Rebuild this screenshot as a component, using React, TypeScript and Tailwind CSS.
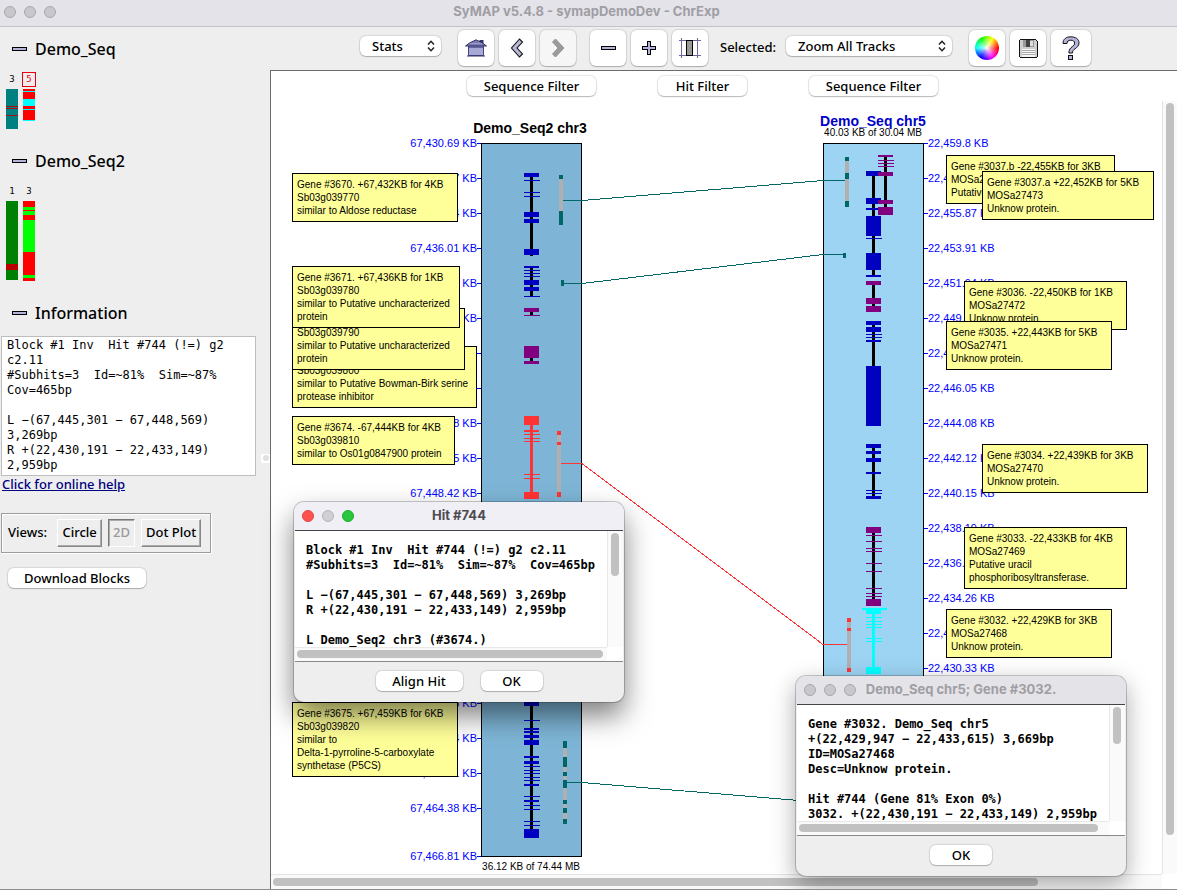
import type { ReactNode } from "react";

const UI = "font-['Noto_Sans','Open_Sans',sans-serif]";
const MONO = "font-['DejaVu_Sans_Mono',monospace]";

const BLUE = "#0000c0";
const PURPLE = "#800080";
const RED = "#ff3333";
const CYAN = "#00ffff";
const TEAL = "#006666";
const GREY = "#b0b0b0";

type Span = [y: number, h: number];

interface Gene {
  color: string;
  spine: Span;
  spineColor?: string;
  x?: number;
  exons: Span[];
}

const leftGenes: Gene[] = [
  { color: BLUE, spine: [177, 79], exons: [[173, 4], [180, 1], [192, 1], [196, 1], [212, 5], [219, 4], [249, 6]] },
  { color: BLUE, spine: [268, 28], exons: [[266, 2], [270, 1], [273, 1], [276, 1], [280, 5], [287, 4], [296, 1]] },
  { color: PURPLE, spine: [312, 3], exons: [[308, 4], [315, 1]] },
  { color: PURPLE, spine: [358, 3], exons: [[346, 12], [361, 3]] },
  {
    color: RED,
    spineColor: RED,
    spine: [425, 67],
    exons: [[416, 9], [430, 2], [434, 1], [438, 1], [441, 1], [474, 1], [478, 1], [492, 7]],
  },
  {
    color: BLUE,
    spine: [706, 124],
    exons: [
      [696, 10], [720, 1], [728, 2], [731, 2], [735, 3], [740, 5], [756, 2], [761, 3], [766, 1], [770, 1], [773, 1],
      [777, 1], [780, 1], [784, 2], [796, 1], [800, 2], [805, 1], [809, 1], [821, 1], [825, 1], [829, 9],
    ],
  },
];

const rightGenes: Gene[] = [
  {
    color: BLUE,
    spine: [176, 100],
    exons: [[171, 5], [198, 6], [208, 2], [216, 20], [238, 1], [253, 17], [275, 2]],
  },
  { color: PURPLE, x: 878, spine: [157, 50], exons: [[155, 2], [160, 1], [163, 1], [166, 1], [172, 4], [200, 4], [207, 8]] },
  { color: PURPLE, spine: [285, 21], exons: [[281, 4], [298, 6], [306, 6]] },
  { color: BLUE, spine: [325, 41], exons: [[321, 4], [327, 5], [334, 1], [337, 1], [340, 2], [366, 60]] },
  { color: BLUE, spine: [448, 48], exons: [[444, 4], [451, 3], [458, 4], [472, 2], [490, 1], [493, 1], [496, 3]] },
  {
    color: PURPLE,
    spine: [533, 66],
    exons: [
      [527, 6], [535, 1], [541, 1], [548, 1], [551, 1], [563, 1], [571, 1], [588, 1], [593, 1], [596, 1], [599, 7],
    ],
  },
  {
    color: CYAN,
    spineColor: CYAN,
    spine: [614, 53],
    exons: [[610, 4], [617, 1], [621, 1], [624, 1], [627, 1], [638, 1], [641, 1], [667, 7]],
  },
];

interface HitBar {
  x: number;
  w: number;
  range: Span;
  color: string;
  parts: Span[];
}

const hitBars: HitBar[] = [
  { x: 559, w: 4, range: [175, 50], color: TEAL, parts: [[175, 4], [211, 14]] },
  { x: 561, w: 3, range: [280, 6], color: TEAL, parts: [[280, 6]] },
  { x: 557, w: 4, range: [431, 66], color: RED, parts: [[431, 4], [442, 3], [492, 5]] },
  {
    x: 563, w: 4, range: [741, 83], color: TEAL,
    parts: [[741, 7], [757, 10], [772, 4], [780, 8], [800, 4], [808, 5], [819, 5]],
  },
  { x: 845, w: 4, range: [157, 50], color: TEAL, parts: [[157, 4], [173, 6], [201, 6]] },
  { x: 843, w: 3, range: [253, 5], color: TEAL, parts: [[253, 5]] },
  { x: 847, w: 4, range: [618, 54], color: RED, parts: [[618, 4], [628, 3], [668, 4]] },
];

const hitLines = [
  { color: TEAL, points: "563,200.5 582,200.5 823,180.5 845,180.5" },
  { color: TEAL, points: "564,283.5 582,283.5 823,254.5 843,254.5" },
  { color: RED, points: "561,463.5 582,463.5 823,644.5 847,644.5" },
  { color: TEAL, points: "567,782.5 582,782.5 823,802.5 845,802.5" },
];

interface Note {
  x: number;
  y: number;
  w: number;
  lines: string[];
}

const notes: Note[] = [
  { x: 292, y: 173, w: 166, lines: ["Gene #3670. +67,432KB for 4KB", "Sb03g039770", "similar to Aldose reductase"] },
  {
    x: 292, y: 346, w: 185,
    lines: ["Gene #3673.", "Sb03g039800", "similar to Putative Bowman-Birk serine", "protease inhibitor"],
  },
  { x: 292, y: 308, w: 173, lines: ["Gene #3672.", "Sb03g039790", "similar to Putative uncharacterized", "protein"] },
  {
    x: 292, y: 266, w: 168,
    lines: ["Gene #3671. +67,436KB for 1KB", "Sb03g039780", "similar to Putative uncharacterized", "protein"],
  },
  { x: 292, y: 416, w: 163, lines: ["Gene #3674. -67,444KB for 4KB", "Sb03g039810", "similar to Os01g0847900 protein"] },
  {
    x: 292, y: 702, w: 166,
    lines: [
      "Gene #3675. +67,459KB for 6KB", "Sb03g039820", "similar to", "Delta-1-pyrroline-5-carboxylate",
      "synthetase (P5CS)",
    ],
  },
  { x: 946, y: 155, w: 169, lines: ["Gene #3037.b -22,455KB for 3KB", "MOSa27473", "Putative"] },
  { x: 982, y: 171, w: 172, lines: ["Gene #3037.a +22,452KB for 5KB", "MOSa27473", "Unknow protein."] },
  { x: 964, y: 281, w: 163, lines: ["Gene #3036. -22,450KB for 1KB", "MOSa27472", "Unknow protein."] },
  { x: 946, y: 321, w: 166, lines: ["Gene #3035. +22,443KB for 5KB", "MOSa27471", "Unknow protein."] },
  { x: 982, y: 444, w: 166, lines: ["Gene #3034. +22,439KB for 3KB", "MOSa27470", "Unknow protein."] },
  {
    x: 964, y: 527, w: 163,
    lines: ["Gene #3033. -22,433KB for 4KB", "MOSa27469", "Putative uracil", "phosphoribosyltransferase."],
  },
  { x: 946, y: 609, w: 166, lines: ["Gene #3032. +22,429KB for 3KB", "MOSa27468", "Unknow protein."] },
];

/* Diagram coordinates start at this origin. */
const ORIGIN = { x: 271, y: 101 };

function kb(value: number) {
  const rounded = Math.round(value * 100) / 100;
  return `${rounded.toLocaleString("en-US", { maximumFractionDigits: 2 })} KB`;
}

const leftTicks = [
  ...[0, 1, 2, 3, 4, 5, 6, 7, 8, 9, 10, 16, 17, 18, 19].map((k) => ({
    y: 143 + 35 * k,
    label: kb(67430.6935 + 1.7731 * k),
  })),
  { y: 856, label: "67,466.81 KB" },
];
const rightTicks = Array.from({ length: 16 }, (_, k) => ({ y: 143 + 35 * k, label: kb(22459.8 - 1.9647 * k) }));

function GeneGlyph({ gene, x }: { gene: Gene; x: number }) {
  const gx = gene.x ?? x;
  return (
    <g>
      <rect x={gx + 6} y={gene.spine[0]} width={3} height={gene.spine[1]} fill={gene.spineColor ?? "#000"} />
      {gene.exons.map(([y, h]) => (
        <rect key={y} x={gx} y={y} width={h === 1 ? 16 : 15} height={h} fill={gene.color} />
      ))}
    </g>
  );
}

function Diagram() {
  return (
    <div className="relative h-[773px] w-[890px] font-['Liberation_Sans',Arial,sans-serif]">
      <svg
        className="block"
        width={890}
        height={773}
        viewBox="271 101 890 773"
        shapeRendering="crispEdges"
        role="img"
        aria-label="Synteny between Demo_Seq2 chr3 and Demo_Seq chr5"
      >
        <rect x={481.5} y={143.5} width={100} height={713} fill="#7eb5d6" stroke="#000" />
        <rect x={823.5} y={143.5} width={100} height={713} fill="#9dd4f3" stroke="#000" />
        <g fontSize={11} fill="#0000ff">
          {leftTicks.map((t) => (
            <g key={t.y}>
              <rect x={477} y={t.y} width={4} height={1} />
              <text x={477} y={t.y + 4} textAnchor="end">{t.label}</text>
            </g>
          ))}
          {rightTicks.map((t) => (
            <g key={t.y}>
              <rect x={924} y={t.y} width={4} height={1} />
              <text x={928} y={t.y + 4}>{t.label}</text>
            </g>
          ))}
        </g>
        {leftGenes.map((g) => <GeneGlyph key={g.spine[0]} gene={g} x={524} />)}
        {rightGenes.map((g) => <GeneGlyph key={g.spine[0]} gene={g} x={866} />)}
        <rect x={862} y={608} width={25} height={2} fill={CYAN} />
        {hitLines.map((l) => (
          <polyline key={l.points} points={l.points} fill="none" stroke={l.color} />
        ))}
        {hitBars.map((b) => (
          <g key={`${b.x}-${b.range[0]}`}>
            <rect x={b.x} y={b.range[0]} width={b.w} height={b.range[1]} fill={GREY} />
            {b.parts.map(([y, h]) => <rect key={y} x={b.x} y={y} width={b.w} height={h} fill={b.color} />)}
          </g>
        ))}
        <g textAnchor="middle">
          <text x={530} y={133} fontSize={14} fontWeight="bold">Demo_Seq2 chr3</text>
          <text x={873} y={126} fontSize={14} fontWeight="bold" fill="#0000c8">Demo_Seq chr5</text>
          <text x={873} y={136} fontSize={10}>40.03 KB of 30.04 MB</text>
          <text x={531} y={870} fontSize={10}>36.12 KB of 74.44 MB</text>
        </g>
      </svg>
      {notes.map((n) => (
        <div
          key={n.lines[0]}
          className="absolute border border-black bg-[#ffff99] px-1 py-1 text-[10px] leading-[13px] whitespace-nowrap text-black"
          style={{ left: n.x - ORIGIN.x, top: n.y - ORIGIN.y, width: n.w }}
        >
          {n.lines.map((line) => <p key={line}>{line}</p>)}
        </div>
      ))}
    </div>
  );
}

function PushButton({ children, className = "" }: { children: ReactNode; className?: string }) {
  return (
    <button
      type="button"
      className={`h-5 shrink-0 rounded-md bg-white text-[13px] leading-5 font-medium text-black shadow-[0_0_1px_1px_rgba(0,0,0,0.1),0_1px_1px_rgba(0,0,0,0.2)] ${className}`}
    >
      {children}
    </button>
  );
}

function ToolButton({ label, disabled, className = "w-9", children }: {
  label: string;
  disabled?: boolean;
  className?: string;
  children: ReactNode;
}) {
  return (
    <button
      type="button"
      aria-label={label}
      disabled={disabled}
      className={`flex h-9 shrink-0 items-center justify-center rounded-md bg-white shadow-[0_0_1px_1px_rgba(0,0,0,0.1),0_1px_1px_rgba(0,0,0,0.2)] disabled:bg-[#f6f6f6] ${className}`}
    >
      {children}
    </button>
  );
}

function Dropdown({ label, value, className }: { label: string; value: string; className: string }) {
  return (
    <div className={`relative shrink-0 ${className}`}>
      <select
        aria-label={label}
        className="block h-5 w-full appearance-none rounded-md bg-white pl-3 text-[13px] leading-5 font-medium text-black shadow-[0_0_1px_1px_rgba(0,0,0,0.1),0_1px_1px_rgba(0,0,0,0.2)]"
      >
        <option>{value}</option>
      </select>
      <svg className="pointer-events-none absolute top-1 right-1.5" width={8} height={12} viewBox="0 0 8 12" fill="none" stroke="#222" strokeWidth={1.5}>
        <path d="M1 4.5 4 1.3 7 4.5M1 7.5 4 10.7 7 7.5" />
      </svg>
    </div>
  );
}

function HomeIcon() {
  return (
    <svg width={22} height={18} viewBox="0 0 22 18">
      <path d="M14.500 1h4v5h-4z" fill="#333366" />
      <path d="M3.500 7h15v9.500h-15z" fill="#a9a9d6" stroke="#444480" />
      <path d="M11 .8 17.500 4l4 3H.5l4-3z" fill="#7a7ab4" stroke="#333366" />
      <path d="M5 4.500h12" stroke="#9c9ccc" />
      <path d="M2 17h18" stroke="#333366" />
      <path d="M4 8.500h14" stroke="#6666a0" />
    </svg>
  );
}

function BackIcon() {
  return (
    <svg width={14} height={20} viewBox="0 0 14 20">
      <path d="M9.500 1 1.500 10l8 9 3-3L7 10l5.500-6z" fill="#b8b8dc" stroke="#111" strokeWidth={1.1} />
    </svg>
  );
}

function ForwardIcon() {
  return (
    <svg width={14} height={20} viewBox="0 0 14 20">
      <path d="M4.500 1 13 10l-8.500 9-3-3L7 10 1.500 4z" fill="#9b9b9b" stroke="#888" strokeWidth={0.8} />
    </svg>
  );
}

function MinusIcon() {
  return (
    <svg width={15} height={4} viewBox="0 0 15 4" shapeRendering="crispEdges">
      <rect x={0.5} y={0.5} width={14} height={3} fill="#b4b4da" stroke="#000" />
    </svg>
  );
}

function PlusIcon() {
  return (
    <svg width={14} height={14} viewBox="0 0 14 14" shapeRendering="crispEdges">
      <path d="M5.500.5h3v5h5v3h-5v5h-3v-5h-5v-3h5z" fill="#b4b4da" stroke="#000" />
    </svg>
  );
}

function ScaleIcon() {
  return (
    <svg width={22} height={20} viewBox="0 0 22 20" shapeRendering="crispEdges">
      <path d="M2.500 0v20M18.500 0v20M0 2.500h22M0 17.500h22" stroke="#6a6aa0" fill="none" />
      <rect x={7.500} y={2.500} width={6} height={15} fill="#9a9a9a" stroke="#000" />
    </svg>
  );
}

function SaveIcon() {
  return (
    <svg width={19} height={19} viewBox="0 0 19 19" shapeRendering="crispEdges">
      <path d="M1.500.5h15l2 2v15l-1 1h-16l-1-1v-16z" fill="#cfcfcf" stroke="#111" />
      <rect x={4} y={1} width={11} height={7} fill="#999" />
      <rect x={7} y={1} width={4} height={7} fill="#444" />
      <rect x={11} y={2} width={3} height={5} fill="#ddd" />
      <rect x={3} y={10} width={13} height={8} fill="#f6f6f6" />
      <path d="M3 11.500h13M3 13.500h13M3 15.500h13" stroke="#aaa" />
    </svg>
  );
}

function HelpIcon() {
  return (
    <svg width={18} height={24} viewBox="0 0 18 24">
      <path
        d="M1 7.500C1 3 4.200.8 8.800.8S17 3 17 6.800c0 3-1.900 4.500-3.800 5.900-1.700 1.200-2.700 2-2.700 4.300H6.900c0-3.600 1.600-5 3.300-6.300 1.500-1.200 2.400-1.900 2.400-3.600 0-1.800-1.300-2.900-3.700-2.900-2.500 0-3.900 1-3.900 3.300z"
        fill="#b4b4da"
        stroke="#111"
      />
      <rect x={6.500} y={19.500} width={4} height={4} fill="#b4b4da" stroke="#111" />
    </svg>
  );
}

function ColorWheel() {
  return (
    <span className="block size-6 rounded-full bg-[radial-gradient(circle,#fff_0%,rgba(255,255,255,0.6)_22%,transparent_65%),conic-gradient(#80ff00,#ffff00_30deg,#ff8000_60deg,#ff0000_90deg,#ff0080_120deg,#ff00ff_150deg,#6000ff_185deg,#0000ff_215deg,#0080ff_245deg,#00ffff_270deg,#00ff80_300deg,#00ff00_330deg,#80ff00)]" />
  );
}

function SectionHeader({ title }: { title: string }) {
  return (
    <button type="button" className="flex h-6 items-center gap-2 pl-3 text-left text-[16px] leading-6 font-medium text-black">
      <MinusIcon />
      {title}
    </button>
  );
}

interface ChromosomeProps {
  name: string;
  height: number;
  base: string;
  bandColor: string;
  bands: Span[];
  selected?: boolean;
}

function Chromosome({ name, height, base, bandColor, bands, selected }: ChromosomeProps) {
  return (
    <div className="flex w-3.5 flex-col items-center gap-0.5">
      <span
        className={`flex h-[15px] w-full items-center justify-center font-['DejaVu_Sans_Mono',monospace] text-[9px] leading-none ${
          selected ? "border border-red-600 text-red-600" : "text-black"
        }`}
      >
        {name}
      </span>
      <svg width={12} height={height} shapeRendering="crispEdges" aria-hidden="true">
        <rect width={12} height={height} fill={base} />
        {bands.map(([y, h]) => <rect key={y} y={y} width={12} height={h} fill={bandColor} />)}
      </svg>
    </div>
  );
}

function Sidebar() {
  return (
    <aside className="flex w-[270px] shrink-0">
      <div className="flex min-w-0 flex-1 flex-col items-start pt-2.5">
        <SectionHeader title="Demo_Seq" />
        <div className="mt-[11px] flex gap-[3px] pl-[5px]">
          <Chromosome name="3" height={40} base="#008080" bandColor="#a01010" bands={[[17, 1], [19, 1], [26, 1]]} />
          <Chromosome name="5" selected height={32} base="#ff0000" bandColor="#00ffff" bands={[[2, 1], [10, 7], [20, 1], [31, 1]]} />
        </div>
        <div className="mt-5"><SectionHeader title="Demo_Seq2" /></div>
        <div className="mt-[11px] flex gap-[3px] pl-[5px]">
          <Chromosome name="1" height={79} base="#008000" bandColor="#b80000" bands={[[63, 6]]} />
          <Chromosome name="3" height={80} base="#ff0000" bandColor="#00ff00" bands={[[6, 3], [10, 4], [19, 32], [74, 3]]} />
        </div>
        <div className="mt-5"><SectionHeader title="Information" /></div>
        <div className="mt-[11px] ml-px h-[140px] w-[255px] border border-[#bdbdbd] bg-white pt-px pl-[5px]">
          <pre className={`text-[12px] leading-[15px] text-black ${MONO}`}>
{`Block #1 Inv  Hit #744 (!=) g2
c2.11
#Subhits=3  Id=~81%  Sim=~87%
Cov=465bp

L −(67,445,301 − 67,448,569)
3,269bp
R +(22,430,191 − 22,433,149)
2,959bp`}
          </pre>
        </div>
        <a href="#help" className="pl-0.5 text-[13px] leading-[17px] font-medium text-[#000080] underline">
          Click for online help
        </a>
        <div className="mt-5 ml-px flex h-10 items-center gap-1.5 border border-[#9c9c9c] pr-[9px] pl-1.5 text-[13px] font-medium text-black shadow-[inset_1px_1px_0_#fff,1px_1px_0_#fff]">
          <span className="mr-1">Views:</span>
          <button type="button" className="h-7 w-[45px] border border-t-white border-r-[#888] border-b-[#888] border-l-white shadow-[inset_-1px_-1px_0_#aaa]">Circle</button>
          <button type="button" disabled className="h-7 w-[27px] border border-t-[#777] border-r-white border-b-white border-l-[#777] text-[#999] shadow-[inset_1px_1px_0_#aaa]">2D</button>
          <button type="button" className="h-7 w-[60px] border border-t-white border-r-[#888] border-b-[#888] border-l-white whitespace-nowrap shadow-[inset_-1px_-1px_0_#aaa]">Dot Plot</button>
        </div>
        <PushButton className="mt-[15px] ml-2 w-[138px]">Download Blocks</PushButton>
      </div>
      <div className="flex w-[9px] items-center">
        <span className="flex h-[9px] w-full items-center justify-center bg-white">
          <span className="size-1.5 rounded-full bg-[#e0e0e0]" />
        </span>
      </div>
    </aside>
  );
}

function Toolbar() {
  return (
    <div className="flex h-[43px] shrink-0 items-center pb-px pl-[90px]">
      <Dropdown label="Stats" value="Stats" className="mb-1 w-[81px]" />
      <div className="ml-[17px] flex gap-[5px]">
        <ToolButton label="Home"><HomeIcon /></ToolButton>
        <ToolButton label="Back"><BackIcon /></ToolButton>
        <ToolButton label="Forward" disabled><ForwardIcon /></ToolButton>
      </div>
      <div className="ml-[14px] flex gap-[5px]">
        <ToolButton label="Zoom out"><MinusIcon /></ToolButton>
        <ToolButton label="Zoom in"><PlusIcon /></ToolButton>
        <ToolButton label="Show scale"><ScaleIcon /></ToolButton>
      </div>
      <span className="ml-3 w-[66px] shrink-0 text-[13px] font-medium text-black">Selected:</span>
      <Dropdown label="Selected" value="Zoom All Tracks" className="mb-1 w-[166px]" />
      <div className="ml-[17px] flex gap-[5px]">
        <ToolButton label="Colors"><ColorWheel /></ToolButton>
        <ToolButton label="Save"><SaveIcon /></ToolButton>
        <ToolButton label="Help" className="w-10"><HelpIcon /></ToolButton>
      </div>
    </div>
  );
}

function Lights({ colors }: { colors: string[] }) {
  return (
    <div className="flex gap-2" aria-hidden="true">
      {colors.map((c, i) => <span key={i} className={`size-3 rounded-full border ${c}`} />)}
    </div>
  );
}

const IDLE = "border-[#a9a8ad] bg-[#c8c7cc]";

interface DialogProps {
  title: string;
  active?: boolean;
  className: string;
  text: string;
  thumbs: { vertical: string; horizontal: string };
  buttons: { label: string; className: string }[];
}

function Dialog({ title, active, className, text, thumbs, buttons }: DialogProps) {
  return (
    <section
      role="dialog"
      aria-label={title}
      className={`absolute flex h-[200px] w-[330px] flex-col overflow-hidden rounded-[10px] bg-[#eeeeee] ${className} ${
        active
          ? "shadow-[0_0_0_1px_rgba(0,0,0,0.2),0_14px_28px_rgba(0,0,0,0.5)]"
          : "shadow-[0_0_0_1px_rgba(0,0,0,0.2),0_8px_24px_rgba(0,0,0,0.35)]"
      }`}
    >
      <header className={`relative flex h-7 shrink-0 items-center pl-2 ${active ? "bg-[#f0eff5]" : "bg-[#e4e3e8]"}`}>
        <Lights colors={active ? ["border-[#e0443e] bg-[#ff5350]", "border-[#b5b4b9] bg-[#d0cfd4]", "border-[#1aab29] bg-[#27c840]"] : [IDLE, IDLE, IDLE]} />
        <h2
          className={`flex-1 pr-[60px] text-center font-['Inter',sans-serif] text-[13px] font-bold ${
            active ? "text-[#4c4b50]" : "text-[#9f9ea3]"
          }`}
        >
          {title}
        </h2>
      </header>
      <div className="mx-px flex h-[132px] shrink-0 flex-col border-t border-b border-t-[#444] border-b-[#888] bg-white">
        <div className="flex h-[116px]">
          <pre className={`min-w-0 flex-1 overflow-hidden pt-3 pl-[11px] text-[12px] leading-[15px] font-bold text-black ${MONO}`}>
            {text}
          </pre>
          <div className="w-4 border-l border-[#e8e8e8] bg-[#fafafa] pt-0.5 pl-[3px]">
            <div className={`w-2 rounded-full bg-[#c1c1c1] ${thumbs.vertical}`} />
          </div>
        </div>
        <div className="mr-4 flex-1 border-t border-[#e8e8e8] bg-[#fafafa] pt-0.5 pl-0.5">
          <div className={`h-2 rounded-full bg-[#c1c1c1] ${thumbs.horizontal}`} />
        </div>
      </div>
      <footer className="flex flex-1 items-center justify-center gap-[18px] pb-0.5">
        {buttons.map((b) => <PushButton key={b.label} className={b.className}>{b.label}</PushButton>)}
      </footer>
    </section>
  );
}

export default function App() {
  return (
    <div className={`relative flex h-screen flex-col overflow-hidden border-b border-[#8c8c8c] bg-[#eeeeee] text-black ${UI}`}>
      <header className="flex h-[27px] shrink-0 items-center border-b border-[#c3c2c8] bg-[#e4e3e9] pb-0.5 pl-1">
        <Lights colors={[IDLE, IDLE, IDLE]} />
        <h1 className="flex-1 pr-[60px] text-center font-['Inter',sans-serif] text-[13px] font-bold text-[#9f9ea4]">
          SyMAP v5.4.8 - symapDemoDev - ChrExp
        </h1>
      </header>
      <div className="flex min-h-0 flex-1">
        <Sidebar />
        <main className="flex min-w-0 flex-1 flex-col">
          <Toolbar />
          <div className="flex min-h-0 flex-1 border-t border-l border-[#6b6b6b] bg-white">
            <div className="flex min-w-0 flex-1 flex-col">
              <div className="min-h-0 flex-1 overflow-hidden">
                <div className="flex h-[30px] gap-[62px] pt-[5px] pl-[196px]">
                  <PushButton className="w-[129px]">Sequence Filter</PushButton>
                  <PushButton className="w-[89px]">Hit Filter</PushButton>
                  <PushButton className="w-[129px]">Sequence Filter</PushButton>
                </div>
                <Diagram />
              </div>
              <div className="h-[15px] shrink-0 border-t border-[#e4e4e4] bg-[#fafafa] pt-[3px] pl-0.5">
                <div className="h-2 w-[86%] rounded-full bg-[#c1c1c1]" />
              </div>
            </div>
            <div className="mt-[30px] mb-[15px] w-[15px] shrink-0 border-l border-[#e4e4e4] bg-[#fafafa] pt-0.5 pl-[3px]">
              <div className="h-[95%] w-2 rounded-full bg-[#c1c1c1]" />
            </div>
          </div>
        </main>
      </div>
      <Dialog
        active
        title="Hit #744"
        className="top-[502px] left-[294px]"
        text={`Block #1 Inv  Hit #744 (!=) g2 c2.11
#Subhits=3  Id=~81%  Sim=~87%  Cov=465bp

L −(67,445,301 − 67,448,569) 3,269bp
R +(22,430,191 − 22,433,149) 2,959bp

L Demo_Seq2 chr3 (#3674.)`}
        thumbs={{ vertical: "h-[43px]", horizontal: "w-[306px]" }}
        buttons={[
          { label: "Align Hit", className: "w-[87px]" },
          { label: "OK", className: "w-[62px]" },
        ]}
      />
      <Dialog
        title="Demo_Seq chr5; Gene #3032."
        className="top-[676px] left-[796px]"
        text={`Gene #3032. Demo_Seq chr5
+(22,429,947 − 22,433,615) 3,669bp
ID=MOSa27468
Desc=Unknow protein.

Hit #744 (Gene 81% Exon 0%)
3032. +(22,430,191 − 22,433,149) 2,959bp`}
        thumbs={{ vertical: "h-[37px]", horizontal: "w-[299px]" }}
        buttons={[{ label: "OK", className: "w-[62px]" }]}
      />
    </div>
  );
}
